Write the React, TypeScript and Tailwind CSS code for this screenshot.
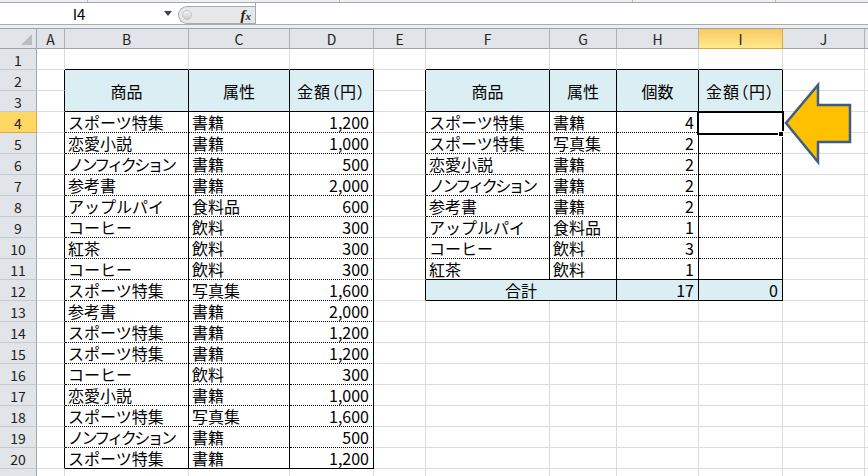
import React from "react";

type B = "solid" | "dotted" | "grid";

const RB: Record<B, string> = {
  solid: "border-r-black",
  dotted: "border-r-black",
  grid: "border-r-[#dadcdd]",
};
const BB: Record<B, string> = {
  solid: "border-b-black",
  dotted: "border-b-black [border-bottom-style:dotted]",
  grid: "border-b-[#dadcdd]",
};

const leftData: string[][] = [
  ["スポーツ特集", "書籍", "1,200"],
  ["恋愛小説", "書籍", "1,000"],
  ["ノンフィクション", "書籍", "500"],
  ["参考書", "書籍", "2,000"],
  ["アップルパイ", "食料品", "600"],
  ["コーヒー", "飲料", "300"],
  ["紅茶", "飲料", "300"],
  ["コーヒー", "飲料", "300"],
  ["スポーツ特集", "写真集", "1,600"],
  ["参考書", "書籍", "2,000"],
  ["スポーツ特集", "書籍", "1,200"],
  ["スポーツ特集", "書籍", "1,200"],
  ["コーヒー", "飲料", "300"],
  ["恋愛小説", "書籍", "1,000"],
  ["スポーツ特集", "写真集", "1,600"],
  ["ノンフィクション", "書籍", "500"],
  ["スポーツ特集", "書籍", "1,200"],
];

const rightData: string[][] = [
  ["スポーツ特集", "書籍", "4"],
  ["スポーツ特集", "写真集", "2"],
  ["恋愛小説", "書籍", "2"],
  ["ノンフィクション", "書籍", "2"],
  ["参考書", "書籍", "2"],
  ["アップルパイ", "食料品", "1"],
  ["コーヒー", "飲料", "3"],
  ["紅茶", "飲料", "1"],
];

const LETTERS = ["A", "B", "C", "D", "E", "F", "G", "H", "I", "J", ""];

function rightB(r: number, c: number): B {
  if (r >= 2 && r <= 20 && c >= 1 && c <= 4) return "solid";
  if (r >= 2 && r <= 12 && c >= 5 && c <= 9) return "solid";
  return "grid";
}

function bottomB(r: number, c: number): B {
  const inL = c >= 2 && c <= 4;
  const inR = c >= 6 && c <= 9;
  if (r === 1 && (inL || inR)) return "solid";
  if (inL && r >= 2 && r <= 20) {
    if (r <= 3 || r === 20) return "solid";
    return "dotted";
  }
  if (inR && r >= 2 && r <= 12) {
    if (r <= 3 || r >= 11) return "solid";
    return "dotted";
  }
  return "grid";
}

type Content =
  | "skip"
  | {
      text: string;
      align: "l" | "r" | "c" | "h";
      bg?: boolean;
      span?: "row" | "col";
    };

function content(r: number, c: number): Content {
  const headers: Record<number, string> = {
    2: "商品",
    3: "属性",
    4: "金額（円）",
    6: "商品",
    7: "属性",
    8: "個数",
    9: "金額（円）",
  };
  if (r === 2 && headers[c]) return { text: headers[c], align: "h", bg: true, span: "row" };
  if (r === 3 && headers[c]) return "skip";
  if (r >= 4 && r <= 20 && c >= 2 && c <= 4) {
    return { text: leftData[r - 4][c - 2], align: c === 4 ? "r" : "l" };
  }
  if (r >= 4 && r <= 11 && c >= 6 && c <= 9) {
    if (c === 9) return { text: "", align: "l" };
    return { text: rightData[r - 4][c - 6], align: c === 8 ? "r" : "l" };
  }
  if (r === 12) {
    if (c === 6) return { text: "合計", align: "c", bg: true, span: "col" };
    if (c === 7) return "skip";
    if (c === 8) return { text: "17", align: "r", bg: true };
    if (c === 9) return { text: "0", align: "r", bg: true };
  }
  return { text: "", align: "l" };
}

function FormulaBar() {
  return (
    <div className="flex flex-col">
      <div className="flex h-[3px] border-b border-b-[#a3a9b1] bg-[#eef0f3]">
        <div className="w-[88px] border-r border-r-[#b5b9be]" />
        <div className="w-[252px] border-r border-r-[#b5b9be]" />
        <div className="w-[293px] border-r border-r-[#b5b9be]" />
        <div className="w-[143px] border-r border-r-[#b5b9be]" />
        <div className="flex-1" />
      </div>
      <div className="flex h-[21px] bg-white">
        <div className="relative flex w-[178px] items-center">
          <div className="flex w-[158px] items-center justify-center text-[15px] leading-none text-black">
            I4
          </div>
          <svg width="8" height="5" viewBox="0 0 8 5" className="ml-[6px]">
            <polygon points="0,0 8,0 4,5" fill="#444" />
          </svg>
        </div>
        <div className="mt-[3px] flex h-[18px] w-[77px] items-center rounded-l-full border border-r-0 border-[#a7abb0] bg-[#e6e7e9]">
          <div className="ml-[3px] h-[10px] w-[10px] rounded-full border border-[#c2c5c9] bg-[linear-gradient(#f4f4f4,#c9ccd0)]" />
          <div className="ml-auto mr-[4px] text-[15px] leading-none text-[#222] [font-family:'Liberation_Serif',serif] italic font-bold">
            f<span className="text-[11px]">x</span>
          </div>
        </div>
        <div className="w-px bg-[#a7abb0]" />
        <div className="flex-1 bg-white" />
      </div>
      <div className="h-px bg-[#a9adb2]" />
      <div className="h-[4px] border-b border-b-[#9aa3ad] bg-[#eceef0]" />
    </div>
  );
}

function Sheet() {
  const cells: React.ReactNode[] = [];
  cells.push(
    <div
      key="corner"
      className="relative border-r border-b border-r-[#9ea5ad] border-b-[#9ea5ad] bg-[#e1e4e8]"
    >
      <svg width="36" height="19" className="absolute left-0 top-0">
        <polygon points="32,5 32,16 21,16" fill="#b9bdc2" />
      </svg>
    </div>
  );
  LETTERS.forEach((l, i) => {
    const sel = l === "I";
    cells.push(
      <div
        key={"h" + i}
        className={
          "flex items-center justify-center border-b pt-px text-[14px] leading-none " +
          (i === 10 ? "" : "border-r ") +
          (sel
            ? "border-r-[#e1a63f] border-b-[#e1a63f] bg-[linear-gradient(#f8c961,#ffe98c)] text-[#222]"
            : "border-r-[#abb1b8] border-b-[#9ea5ad] bg-[#e1e4e8] text-[#222]")
        }
      >
        {l}
      </div>
    );
  });

  for (let r = 1; r <= 21; r++) {
    const selRow = r === 4;
    cells.push(
      <div
        key={"r" + r}
        className={
          "flex items-center justify-center border-r border-b pt-[2px] text-[14px] leading-none " +
          (selRow
            ? "border-r-[#e1a63f] border-b-[#e1a63f] bg-[#ffd764] text-[#222]"
            : "border-r-[#9ea5ad] border-b-[#c5cad0] bg-[#e1e4e8] text-[#222]")
        }
      >
        {r}
      </div>
    );
    for (let c = 1; c <= 11; c++) {
      const ct = content(r, c);
      if (ct === "skip") continue;
      let rc = c;
      let br = r;
      if (ct.span === "col") rc = c + 1;
      if (ct.span === "row") br = r + 1;
      const rb = rightB(br, rc);
      const bb = bottomB(br, c);
      let align = "items-end pl-[3px]";
      if (ct.align === "r") align = "items-end justify-end pr-[4px]";
      if (ct.align === "c") align = "items-end justify-center";
      if (ct.align === "h") align = "items-center justify-center";
      let extra = "";
      if (ct.text === "ノンフィクション") extra = " tracking-[-2.6px]";
      if (ct.text === "金額（円）") extra = " [font-feature-settings:'palt'] tracking-[1px]";
      cells.push(
        <div
          key={r + "-" + c}
          className={
            "flex whitespace-nowrap border-b text-[16px] leading-[20px] text-black " +
            (c === 11 ? "" : "border-r " + RB[rb] + " ") +
            BB[bb] +
            " " +
            align +
            (ct.bg ? " bg-[#daeef3]" : " bg-white") +
            (ct.span === "row" ? " row-span-2" : "") +
            (ct.span === "col" ? " col-span-2" : "") +
            extra
          }
        >
          {ct.text}
        </div>
      );
    }
  }

  return (
    <div className="grid grid-cols-[37px_28px_124px_101px_84px_52px_124px_67px_82px_84px_82px_1fr] grid-rows-[20px_repeat(21,21px)]">
      {cells}
    </div>
  );
}

export default function App() {
  return (
    <div className="relative h-[476px] w-[868px] overflow-hidden bg-white [font-family:'Noto_Sans_CJK_JP','Noto_Sans',sans-serif]">
      <FormulaBar />
      <Sheet />
      <div className="pointer-events-none absolute left-[697px] top-[111px] h-[24px] w-[87px] border-2 border-black shadow-[inset_0_0_0_1px_white]" />
      <div className="pointer-events-none absolute left-[778px] top-[131px] h-[6px] w-[6px] border border-white bg-black" />
      <svg
        className="absolute left-[780px] top-[80px]"
        width="76"
        height="88"
        viewBox="780 80 76 88"
      >
        <polygon
          points="786,123 818,85 818,105 850,105 850,142 818,142 818,162"
          fill="#ffc000"
          stroke="#3d5d88"
          strokeWidth="2.5"
          strokeLinejoin="miter"
        />
      </svg>
    </div>
  );
}
